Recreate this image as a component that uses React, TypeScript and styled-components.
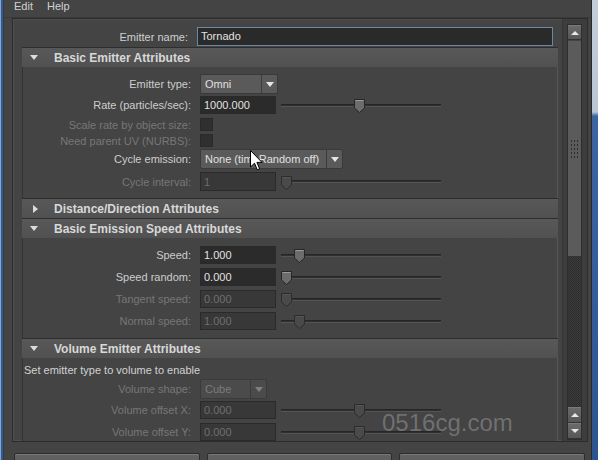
import React from 'react'
import styled, { createGlobalStyle } from 'styled-components'

const GlobalStyle = createGlobalStyle`
    html, body {
        margin: 0;
        padding: 0;
        background: #444444;
    }
    body {
        font-family: "Liberation Sans", Arial, sans-serif;
        font-size: 11px;
        color: #cccccc;
    }
`

interface FieldRow {
    label: string
    kind: 'input' | 'check' | 'drop'
    value?: string
    width?: number
    slider?: number
    disabled?: boolean
    h: number
    mt: number
}

const emitterRows: FieldRow[] = [
    { label: 'Emitter type:', kind: 'drop', value: 'Omni', width: 78, h: 20, mt: 0 },
    { label: 'Rate (particles/sec):', kind: 'input', value: '1000.000', slider: 73, h: 18, mt: 2 },
    { label: 'Scale rate by object size:', kind: 'check', disabled: true, h: 13, mt: 4 },
    { label: 'Need parent UV (NURBS):', kind: 'check', disabled: true, h: 13, mt: 3 },
    { label: 'Cycle emission:', kind: 'drop', value: 'None (timeRandom off)', width: 143, h: 20, mt: 2 },
    { label: 'Cycle interval:', kind: 'input', value: '1', slider: 0, disabled: true, h: 19, mt: 3 },
]

const speedRows: FieldRow[] = [
    { label: 'Speed:', kind: 'input', value: '1.000', slider: 13, h: 18, mt: 0 },
    { label: 'Speed random:', kind: 'input', value: '0.000', slider: 0, h: 18, mt: 4 },
    { label: 'Tangent speed:', kind: 'input', value: '0.000', slider: 0, disabled: true, h: 18, mt: 4 },
    { label: 'Normal speed:', kind: 'input', value: '1.000', slider: 13, disabled: true, h: 18, mt: 4 },
]

const volumeRows: FieldRow[] = [
    { label: 'Volume shape:', kind: 'drop', value: 'Cube', width: 67, disabled: true, h: 20, mt: 1 },
    { label: 'Volume offset X:', kind: 'input', value: '0.000', slider: 73, disabled: true, h: 18, mt: 2 },
    { label: 'Volume offset Y:', kind: 'input', value: '0.000', slider: 73, disabled: true, h: 18, mt: 4 },
]

const Thumb = ({ disabled }: { disabled?: boolean }) => (
    <svg width="11" height="14" viewBox="0 0 11 14">
        <path
            d="M0.5 0.5 H10.5 V9 L5.5 13.5 L0.5 9 Z"
            fill={disabled ? '#4a4a4a' : '#6c6c6c'}
            stroke={disabled ? '#2c2c2c' : '#262626'}
        />
        <path
            d="M1.5 1.5 H9.5"
            stroke={disabled ? '#555' : '#9a9a9a'}
        />
    </svg>
)

const Arrow = ({ disabled }: { disabled?: boolean }) => (
    <svg width="8" height="5" viewBox="0 0 8 5">
        <path d="M0 0 H8 L4 5 Z" fill={disabled ? '#808080' : '#e6e6e6'} />
    </svg>
)

const Field = ({ row }: { row: FieldRow }) => {
    if (row.kind === 'check') return <Check />
    if (row.kind === 'drop')
        return (
            <Drop $w={row.width || 78} $disabled={row.disabled}>
                <DropText>{row.value}</DropText>
                <DropArrow>
                    <Arrow disabled={row.disabled} />
                </DropArrow>
            </Drop>
        )
    return (
        <>
            <Input $disabled={row.disabled}>{row.value}</Input>
            {row.slider !== undefined && (
                <Slider>
                    <Track />
                    <ThumbHolder style={{ left: row.slider }}>
                        <Thumb disabled={row.disabled} />
                    </ThumbHolder>
                </Slider>
            )}
        </>
    )
}

const Rows = ({ rows }: { rows: FieldRow[] }) => (
    <>
        {rows.map((r) => (
            <Row key={r.label} $h={r.h} $mt={r.mt}>
                <Label $disabled={r.disabled}>{r.label}</Label>
                <FieldCell>
                    <Field row={r} />
                </FieldCell>
            </Row>
        ))}
    </>
)

const Header = ({ title, open }: { title: string; open: boolean }) => (
    <HeaderBar>
        <Tri>
            {open ? (
                <svg width="8" height="5" viewBox="0 0 8 5">
                    <path d="M0 0 H8 L4 5 Z" fill="#dcdcdc" />
                </svg>
            ) : (
                <svg width="5" height="8" viewBox="0 0 5 8">
                    <path d="M0 0 L5 4 L0 8 Z" fill="#dcdcdc" />
                </svg>
            )}
        </Tri>
        <HeaderTitle>{title}</HeaderTitle>
    </HeaderBar>
)

export default function App() {
    return (
        <Root>
            <GlobalStyle />
            <LeftEdge />
            <Window>
                <MenuBar>
                    <MenuItem>Edit</MenuItem>
                    <MenuItem>Help</MenuItem>
                </MenuBar>
                <Frame>
                    <Content>
                        <NameRow>
                            <NameLabel>Emitter name:</NameLabel>
                            <NameInput>Tornado</NameInput>
                        </NameRow>

                        <Header title="Basic Emitter Attributes" open />
                        <Body $pt={7} $pb={7}>
                            <Rows rows={emitterRows} />
                        </Body>

                        <Header title="Distance/Direction Attributes" open={false} />

                        <Header title="Basic Emission Speed Attributes" open />
                        <Body $pt={8} $pb={8}>
                            <Rows rows={speedRows} />
                        </Body>

                        <Header title="Volume Emitter Attributes" open />
                        <Body $pt={5} $pb={8}>
                            <Note>Set emitter type to volume to enable</Note>
                            <Rows rows={volumeRows} />
                        </Body>
                    </Content>
                    <ScrollColumn>
                        <Scrollbar>
                            <ScrollBtn $dir="up" $top />
                            <ScrollThumb>
                                <Grip />
                            </ScrollThumb>
                            <ScrollTrack />
                            <ScrollBtn $dir="up" />
                            <ScrollBtn $dir="down" />
                        </Scrollbar>
                    </ScrollColumn>
                </Frame>
                <ButtonBar>
                    <Button />
                    <Button />
                    <Button />
                </ButtonBar>
            </Window>
            <RightEdge />
            <Watermark>0516cg.com</Watermark>
            <Cursor>
                <svg width="13" height="21" viewBox="0 0 13 21">
                    <path
                        d="M0.5 0.5 V17 L4.5 13.2 L7.3 19.8 L9.6 18.8 L6.9 12.4 H12 Z"
                        fill="#ffffff"
                        stroke="#000000"
                        strokeWidth="1"
                    />
                </svg>
            </Cursor>
        </Root>
    )
}

const Root = styled.div`
    position: relative;
    width: 598px;
    height: 460px;
    display: flex;
    overflow: hidden;
    background: #444444;
`

const LeftEdge = styled.div`
    width: 4px;
    flex: none;
    background: linear-gradient(
        to right,
        #88a6cf 0,
        #88a6cf 1px,
        #2f5a96 1px,
        #2f5a96 3px,
        #3a3a3a 3px
    );
`

const RightEdge = styled.div`
    width: 7px;
    flex: none;
    background: linear-gradient(
        to bottom,
        #c3ceda 0,
        #b9c6d4 112px,
        #3c66a2 116px,
        #2c5590 460px
    );
    border-left: 1px solid #2a2a2a;
    box-sizing: border-box;
`

const Window = styled.div`
    flex: 1;
    display: flex;
    flex-direction: column;
    background: #444444;
    min-width: 0;
`

const MenuBar = styled.div`
    height: 18px;
    flex: none;
    display: flex;
    gap: 14px;
    padding-left: 10px;
    box-sizing: border-box;
    border-bottom: 1px solid #3a3a3a;
`

const MenuItem = styled.span`
    font-size: 11px;
    color: #d2d2d2;
    line-height: 13px;
`

const Frame = styled.div`
    height: 424px;
    flex: none;
    margin: 0 3px 0 8px;
    box-sizing: border-box;
    border: 1px solid #2c2c2c;
    box-shadow: inset 0 0 0 1px #4f4f4f;
    display: flex;
    overflow: hidden;
`

const Content = styled.div`
    flex: 1;
    min-width: 0;
    padding: 8px 4px 0 9px;
    display: flex;
    flex-direction: column;
`

const NameRow = styled.div`
    display: flex;
    align-items: center;
    height: 19px;
    margin-bottom: 1px;
    flex: none;
`

const NameLabel = styled.div`
    width: 166px;
    text-align: right;
    color: #d0d0d0;
    margin-right: 9px;
`

const NameInput = styled.div`
    width: 356px;
    height: 19px;
    box-sizing: border-box;
    border: 1px solid #6a87a4;
    background: #2a2a2a;
    color: #e2e2e2;
    padding-left: 3px;
    line-height: 17px;
`

const HeaderBar = styled.div`
    height: 20px;
    flex: none;
    box-sizing: border-box;
    border-top: 1px solid #2e2e2e;
    background: linear-gradient(to bottom, #585858, #515151);
    display: flex;
    align-items: center;
`

const Tri = styled.div`
    width: 32px;
    padding-left: 8px;
    box-sizing: border-box;
    display: flex;
    align-items: center;
    justify-content: flex-start;
    & > svg[width='5'] {
        margin-left: 3px;
    }
`

const HeaderTitle = styled.span`
    font-weight: bold;
    font-size: 12px;
    color: #d8d8d8;
`

const Body = styled.div<{ $pt: number; $pb: number }>`
    flex: none;
    padding: ${(p) => p.$pt}px 0 ${(p) => p.$pb}px 0;
    border-left: 1px solid #333333;
    border-right: 1px solid #575757;
    background: #444444;
`

const Row = styled.div<{ $h: number; $mt: number }>`
    display: grid;
    grid-template-columns: 168px 1fr;
    column-gap: 9px;
    align-items: center;
    height: ${(p) => p.$h}px;
    margin-top: ${(p) => p.$mt}px;
`

const Label = styled.div<{ $disabled?: boolean }>`
    text-align: right;
    white-space: nowrap;
    color: ${(p) => (p.$disabled ? '#777777' : '#cdcdcd')};
`

const FieldCell = styled.div`
    display: flex;
    align-items: center;
    height: 100%;
`

const Input = styled.div<{ $disabled?: boolean }>`
    width: 76px;
    height: 100%;
    box-sizing: border-box;
    border: 1px solid #2a2a2a;
    background: ${(p) => (p.$disabled ? '#383838' : '#2b2b2b')};
    color: ${(p) => (p.$disabled ? '#6e6e6e' : '#e2e2e2')};
    padding-left: 3px;
    display: flex;
    align-items: center;
`

const Check = styled.div`
    width: 13px;
    height: 13px;
    box-sizing: border-box;
    background: #2f2f2f;
    border: 1px solid #2a2a2a;
`

const Drop = styled.div<{ $w: number; $disabled?: boolean }>`
    width: ${(p) => p.$w}px;
    height: 100%;
    box-sizing: border-box;
    border: 1px solid #3a3a3a;
    border-radius: 2px;
    background: ${(p) => (p.$disabled ? '#4b4b4b' : '#5a5a5a')};
    color: ${(p) => (p.$disabled ? '#7c7c7c' : '#e0e0e0')};
    display: flex;
    align-items: center;
`

const DropText = styled.span`
    flex: 1;
    padding-left: 4px;
    white-space: nowrap;
    overflow: hidden;
`

const DropArrow = styled.div`
    width: 15px;
    height: 100%;
    border-left: 1px solid #3c3c3c;
    display: flex;
    align-items: center;
    justify-content: center;
`

const Slider = styled.div`
    position: relative;
    width: 160px;
    height: 100%;
    margin-left: 5px;
    display: flex;
    align-items: center;
`

const Track = styled.div`
    width: 100%;
    height: 3px;
    box-sizing: border-box;
    border-top: 1px solid #262626;
    background: #303030;
    border-bottom: 1px solid #545454;
`

const ThumbHolder = styled.div`
    position: absolute;
    top: 50%;
    margin-top: -6px;
    height: 14px;
    display: flex;
`

const Note = styled.div`
    color: #d2d2d2;
    padding-left: 1px;
    height: 15px;
    line-height: 15px;
    white-space: nowrap;
`

const ScrollColumn = styled.div`
    width: 25px;
    flex: none;
    padding: 5px 6px 0 4px;
    box-sizing: border-box;
    background: #3d3d3d;
    border-left: 1px solid #363636;
`

const Scrollbar = styled.div`
    width: 15px;
    height: 416px;
    display: flex;
    flex-direction: column;
    border: 1px solid #2e2e2e;
    box-sizing: border-box;
`

const ScrollBtn = styled.div<{ $dir: 'up' | 'down'; $top?: boolean }>`
    height: ${(p) => (p.$top ? 15 : 16)}px;
    flex: none;
    box-sizing: border-box;
    background: linear-gradient(to bottom, #6a6a6a, #575757);
    border-top: 1px solid #7a7a7a;
    border-bottom: 1px solid #333;
    display: flex;
    align-items: center;
    justify-content: center;
    &::after {
        content: '';
        border-left: 4px solid transparent;
        border-right: 4px solid transparent;
        ${(p) =>
            p.$dir === 'up'
                ? 'border-bottom: 4px solid #e8e8e8;'
                : 'border-top: 4px solid #e8e8e8;'}
    }
`

const ScrollThumb = styled.div`
    height: 216px;
    flex: none;
    background: #5b5b5b;
    border-top: 1px solid #444;
    box-sizing: border-box;
    display: flex;
    align-items: center;
    justify-content: center;
`

const Grip = styled.div`
    width: 10px;
    height: 20px;
    background-image: radial-gradient(circle, #2f2f2f 0.8px, transparent 1.1px);
    background-size: 3px 4px;
`

const ScrollTrack = styled.div`
    flex: 1;
    background-color: #363636;
    background-image: repeating-conic-gradient(#3c3c3c 0 25%, #2c2c2c 0 50%);
    background-size: 2px 2px;
`

const ButtonBar = styled.div`
    flex: none;
    display: flex;
    gap: 7px;
    padding: 0 6px 0 10px;
    margin-top: 11px;
`

const Button = styled.div`
    flex: 1;
    height: 24px;
    box-sizing: border-box;
    border: 1px solid #2c2c2c;
    border-radius: 2px;
    background: linear-gradient(to bottom, #626262, #555555);
    box-shadow: inset 0 1px 0 #787878;
`

const Watermark = styled.div`
    position: absolute;
    left: 382px;
    top: 409px;
    font-family: "Liberation Sans", Arial, sans-serif;
    font-size: 24px;
    color: rgba(210, 210, 210, 0.32);
    letter-spacing: 0px;
    pointer-events: none;
`

const Cursor = styled.div`
    position: absolute;
    left: 250px;
    top: 150px;
    display: flex;
    pointer-events: none;
`
